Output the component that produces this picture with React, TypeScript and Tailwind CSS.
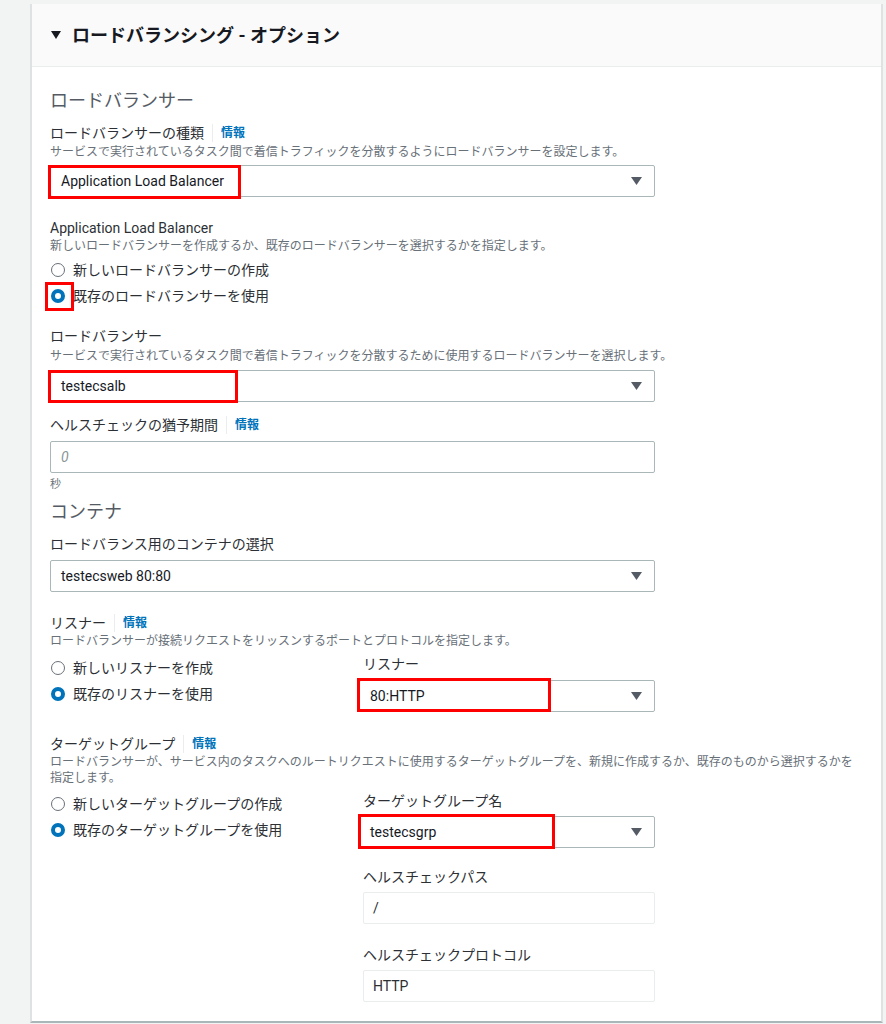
import React from "react";

const FONT = { fontFamily: 'Roboto, "Noto Sans CJK JP", sans-serif' };

function Caret() {
  return (
    <svg width="11" height="8" viewBox="0 0 11 8" className="shrink-0">
      <polygon points="0,0 11,0 5.5,8" fill="#545b64" />
    </svg>
  );
}

function Select({ value, className = "" }: { value: string; className?: string }) {
  return (
    <div
      className={`h-8 flex items-center justify-between pl-[10px] pr-[12px] border border-[#aab7b8] rounded-[2px] bg-white text-[14px] text-[#16191f] ${className}`}
    >
      <span>{value}</span>
      <Caret />
    </div>
  );
}

function RedBox({ className }: { className: string }) {
  return <div className={`absolute border-[3px] border-[#ff0000] pointer-events-none ${className}`} />;
}

function Info() {
  return (
    <>
      <span className="mx-[8px] w-px h-[18px] bg-[#eaeded]" />
      <span className="text-[12px] font-bold text-[#0073bb]">情報</span>
    </>
  );
}

function Label({ text, info, className = "" }: { text: string; info?: boolean; className?: string }) {
  return (
    <div className={`flex items-center h-5 text-[14px] leading-5 text-[#2c3035] ${className}`}>
      <span>{text}</span>
      {info && <Info />}
    </div>
  );
}

function Desc({ children, className = "" }: { children: React.ReactNode; className?: string }) {
  return <div className={`text-[12px] leading-4 text-[#687078] whitespace-nowrap ${className}`}>{children}</div>;
}

function Radio({ checked, label }: { checked?: boolean; label: string }) {
  return (
    <div className="flex items-center h-[26px] gap-[8px] text-[14px] text-[#2c3035]">
      <span
        className={`ml-px w-[14px] h-[14px] rounded-full ${
          checked ? "border-[4px] border-[#0073bb] bg-white" : "border-[1.5px] border-[#687078]"
        }`}
      />
      <span>{label}</span>
    </div>
  );
}

export default function App() {
  return (
    <div className="min-h-[1024px] bg-[#f2f3f3] pt-[4px]" style={FONT}>
      <div className="ml-[30px] w-[853px] bg-white border-l-[2px] border-r-[2px] border-b-[2px] border-l-[#dfe2e2] border-r-[#dfe2e2] border-b-[#aab7b8]">
        {/* header */}
        <div className="h-[63px] bg-[#fafafa] border-b border-[#eaeded] flex items-center pl-[19px]">
          <svg width="10" height="8" viewBox="0 0 10 8" className="mr-[11px]">
            <polygon points="0,0 10,0 5,8" fill="#16191f" />
          </svg>
          <span className="text-[18px] font-bold text-[#16191f]">ロードバランシング - オプション</span>
        </div>

        <div className="pl-[18px] pr-[19px] pt-[22px] pb-[19px]">
          {/* ロードバランサー */}
          <div className="text-[18px] leading-6 font-normal text-[#545b64]">ロードバランサー</div>

          <Label text="ロードバランサーの種類" info className="mt-[10px]" />
          <Desc className="mt-px">サービスで実行されているタスク間で着信トラフィックを分散するようにロードバランサーを設定します。</Desc>
          <div className="relative mt-[5px] w-[605px]">
            <Select value="Application Load Balancer" />
            <RedBox className="-left-[2px] top-0 w-[193px] h-[34px]" />
          </div>

          <Label text="Application Load Balancer" className="mt-[21px]" />
          <Desc>新しいロードバランサーを作成するか、既存のロードバランサーを選択するかを指定します。</Desc>
          <div className="mt-[3px]">
            <Radio label="新しいロードバランサーの作成" />
            <div className="relative">
              <Radio checked label="既存のロードバランサーを使用" />
              <RedBox className="-left-[5px] -top-px w-[29px] h-[29px]" />
            </div>
          </div>

          <Label text="ロードバランサー" className="mt-[17px]" />
          <Desc className="mt-[2px]">サービスで実行されているタスク間で着信トラフィックを分散するために使用するロードバランサーを選択します。</Desc>
          <div className="relative mt-[6px] w-[605px]">
            <Select value="testecsalb" />
            <RedBox className="-left-[2px] top-0 w-[190px] h-[33px]" />
          </div>

          <Label text="ヘルスチェックの猶予期間" info className="mt-[13px]" />
          <div className="mt-[6px] w-[605px] h-8 flex items-center pl-[10px] border border-[#aab7b8] rounded-[2px] text-[14px] italic text-[#879596]">
            0
          </div>
          <div className="mt-[5px] text-[11px] leading-[14px] text-[#687078]">秒</div>

          {/* コンテナ */}
          <div className="mt-[8px] text-[18px] leading-6 font-normal text-[#545b64]">コンテナ</div>
          <Label text="ロードバランス用のコンテナの選択" className="mt-[10px]" />
          <Select value="testecsweb 80:80" className="mt-[6px] w-[605px]" />

          <Label text="リスナー" info className="mt-[21px]" />
          <Desc>ロードバランサーが接続リクエストをリッスンするポートとプロトコルを指定します。</Desc>
          <div className="mt-[5px] grid grid-cols-[309px_296px]">
            <div className="pt-px">
              <Radio label="新しいリスナーを作成" />
              <Radio checked label="既存のリスナーを使用" />
            </div>
            <div>
              <div className="pl-[4px] text-[14px] leading-5 text-[#2c3035]">リスナー</div>
              <div className="relative mt-[6px]">
                <Select value="80:HTTP" />
                <RedBox className="-left-[2px] -top-[2px] w-[194px] h-[34px]" />
              </div>
            </div>
          </div>

          <Label text="ターゲットグループ" info className="mt-[22px]" />
          <Desc>
            ロードバランサーが、サービス内のタスクへのルートリクエストに使用するターゲットグループを、新規に作成するか、既存のものから選択するかを
            <br />
            指定します。
          </Desc>
          <div className="mt-[5px] grid grid-cols-[309px_296px]">
            <div>
              <Radio label="新しいターゲットグループの作成" />
              <Radio checked label="既存のターゲットグループを使用" />
            </div>
            <div>
              <div className="pl-[4px] text-[14px] leading-5 text-[#2c3035]">ターゲットグループ名</div>
              <div className="relative mt-[5px]">
                <Select value="testecsgrp" />
                <RedBox className="-left-[1px] -top-[2px] w-[197px] h-[35px]" />
              </div>

              <div className="mt-[19px] pl-[4px] text-[14px] leading-5 text-[#2c3035]">ヘルスチェックパス</div>
              <div className="mt-[5px] ml-[4px] h-8 flex items-center pl-[9px] border border-[#eaeded] rounded-[2px] text-[14px] text-[#2c3035]">
                /
              </div>
              <div className="mt-[21px] pl-[4px] text-[14px] leading-5 text-[#2c3035]">ヘルスチェックプロトコル</div>
              <div className="mt-[5px] ml-[4px] h-8 flex items-center pl-[9px] border border-[#eaeded] rounded-[2px] text-[14px] text-[#2c3035]">
                HTTP
              </div>
            </div>
          </div>
        </div>
      </div>
    </div>
  );
}
